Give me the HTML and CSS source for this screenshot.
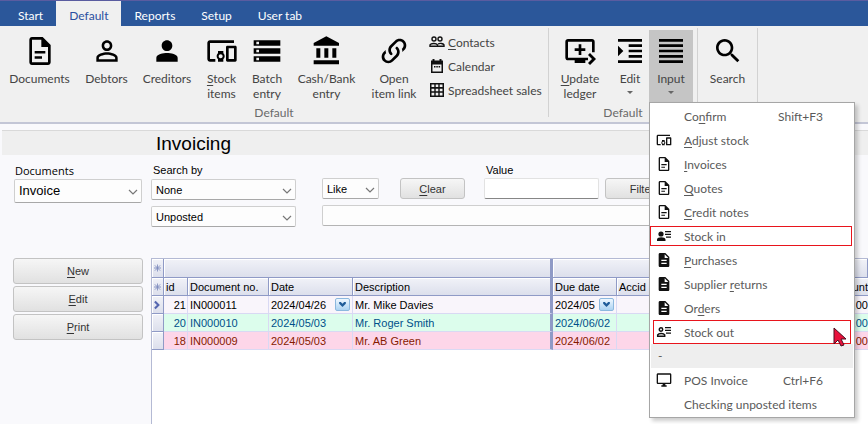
FILE: index.html
```html
<!DOCTYPE html>
<html lang="en">
<head>
<meta charset="utf-8">
<title>Invoicing</title>
<link rel="stylesheet" href="styles.css">
</head>
<body>
<svg class="defs" aria-hidden="true">
  <symbol id="doc" viewBox="0 0 24 24"><path fill-rule="evenodd" d="M14 1.5H6C4.9 1.5 4 2.4 4 3.5V20.5C4 21.6 4.9 22.500 6 22.500H18C19.100 22.500 20 21.600 20 20.500V7.500ZM6 3.500H13V9H18V20.500H6Z"/><path d="M8 12h8v1.800H8zM8 16h5.500v1.800H8z"/></symbol>
  <symbol id="docfill" viewBox="0 0 24 24"><path fill-rule="evenodd" d="M14 1.500H6C4.900 1.500 4 2.400 4 3.500V20.500C4 21.600 4.900 22.500 6 22.500H18C19.100 22.500 20 21.600 20 20.500V7.500ZM8 11.500h8v2H8zM8 16h8v2H8zM13 3.500V9h5.500z"/></symbol>
  <symbol id="person-o" viewBox="0 0 24 24"><path d="M12 5.900c1.160 0 2.100.94 2.100 2.100s-.94 2.100-2.100 2.100S9.900 9.160 9.900 8s.94-2.100 2.100-2.100m0 9c2.970 0 6.100 1.460 6.100 2.100v1.100H5.900V17c0-.64 3.130-2.100 6.100-2.100M12 4C9.790 4 8 5.790 8 8s1.790 4 4 4 4-1.790 4-4-1.790-4-4-4zm0 9c-2.670 0-8 1.340-8 4v3h16v-3c0-2.660-5.330-4-8-4z"/></symbol>
  <symbol id="person" viewBox="0 0 24 24"><path d="M12 12c2.210 0 4-1.790 4-4s-1.790-4-4-4-4 1.790-4 4 1.790 4 4 4zm0 1.500c-2.670 0-8 1-8 3.500v3h16v-3c0-2.500-5.330-3.500-8-3.500z"/></symbol>
  <symbol id="devices" viewBox="0 0 24 24"><path d="M3 6h18V4H3c-1.100 0-2 .9-2 2v12c0 1.100.9 2 2 2h4v-2H3V6zm10 6H9v1.780c-.61.55-1 1.330-1 2.220s.39 1.670 1 2.220V20h4v-1.780c.61-.55 1-1.340 1-2.220s-.39-1.670-1-2.220V12zm-2 5.500c-.83 0-1.500-.67-1.500-1.500s.67-1.500 1.500-1.500 1.500.67 1.500 1.500-.67 1.500-1.500 1.500zM22 8h-6c-.5 0-1 .5-1 1v10c0 .5.5 1 1 1h6c.5 0 1-.5 1-1V9c0-.5-.5-1-1-1zm-1 10h-4v-8h4v8z"/></symbol>
  <symbol id="storage" viewBox="0 0 24 24"><path d="M2 20h20v-4H2v4zm2-3h2v2H4v-2zM2 4v4h20V4H2zm4 3H4V5h2v2zm-4 7h20v-4H2v4zm2-3h2v2H4v-2z"/></symbol>
  <symbol id="bank" viewBox="0 0 24 24"><path d="M4 10v7h3v-7H4zm6 0v7h3v-7h-3zM2 22h19v-3H2v3zm14-12v7h3v-7h-3zm-4.500-9L2 6v2h19V6l-9.500-5z"/></symbol>
  <symbol id="link" viewBox="0 0 24 24"><path d="M10.590 13.410C11 13.800 11 14.440 10.590 14.830C10.200 15.220 9.560 15.220 9.170 14.830C7.220 12.880 7.220 9.710 9.170 7.760L12.710 4.220C14.660 2.270 17.830 2.270 19.780 4.220C21.730 6.170 21.730 9.340 19.780 11.290L18.290 12.780C18.300 11.960 18.170 11.140 17.890 10.360L18.360 9.880C19.540 8.710 19.540 6.810 18.360 5.640C17.190 4.460 15.290 4.460 14.120 5.640L10.590 9.170C9.410 10.340 9.410 12.240 10.590 13.410M13.410 9.170C13.800 8.780 14.440 8.780 14.830 9.170C16.780 11.120 16.780 14.290 14.830 16.240L11.290 19.780C9.340 21.730 6.170 21.730 4.220 19.780C2.270 17.830 2.270 14.660 4.220 12.710L5.710 11.220C5.700 12.040 5.830 12.860 6.110 13.650L5.640 14.120C4.460 15.290 4.460 17.190 5.640 18.360C6.810 19.540 8.710 19.540 9.880 18.360L13.410 14.830C14.590 13.660 14.590 11.760 13.410 10.590C13 10.200 13 9.560 13.410 9.170Z"/></symbol>
  <symbol id="people" viewBox="0 0 16 16"><g fill="none" stroke="#111" stroke-width="1.400"><circle cx="5" cy="5" r="2"/><circle cx="11" cy="5" r="2"/><path d="M1 12.300v-1.500c1-1.500 6-2 7.500 0v1.500zM8.500 12.300H15v-1.500c-.8-1.300-4-2-6-.8"/></g></symbol>
  <symbol id="calendar" viewBox="0 0 16 16"><path fill-rule="evenodd" d="M3.500 1h2v1.500h5V1h2v1.500H14V15H2V2.500h1.500zM3.500 6.500v7h9v-7zM5 8h1.500v1.500H5zM7.300 8h1.500v1.500H7.300zM9.600 8h1.500v1.500H9.600z"/></symbol>
  <symbol id="grid" viewBox="0 0 16 16"><path fill-rule="evenodd" d="M1 1h14v14H1zM2.500 2.500v2.500h2.800V2.500zM6.700 2.500v2.500h2.600V2.500zM10.700 2.500v2.500h2.800V2.500zM2.500 6.700v2.600h2.800V6.700zM6.700 6.700v2.600h2.600V6.700zM10.700 6.700v2.600h2.800V6.700zM2.500 10.800v2.700h2.800v-2.700zM6.700 10.800v2.700h2.600v-2.700zM10.700 10.800v2.700h2.800v-2.700z"/></symbol>
  <symbol id="queue" viewBox="0 0 24 24"><path d="M21 3H3c-1.110 0-2 .89-2 2v12c0 1.100.89 2 2 2h5v2h8v-2h2v-2H3V5h18v8h2V5c0-1.110-.9-2-2-2zm-8 7V7h-2v3H8v2h3v3h2v-3h3v-2h-3zm11 8l-4.500 4.500L18 21l3-3-3-3 1.500-1.500L24 18z"/></symbol>
  <symbol id="indent" viewBox="0 0 24 24"><path d="M3 21h18v-2H3v2zM3 8v8l4-4-4-4zm8 9h10v-2H11v2zM3 3v2h18V3H3zm8 6h10V7H11v2zm0 4h10v-2H11v2z"/></symbol>
  <symbol id="lines" viewBox="0 0 24 24"><path d="M3 21h18v-2H3v2zm0-4h18v-2H3v2zm0-4h18v-2H3v2zm0-4h18V7H3v2zm0-6v2h18V3H3z"/></symbol>
  <symbol id="search" viewBox="0 0 24 24"><path d="M15.500 14h-.79l-.28-.27C15.410 12.590 16 11.110 16 9.500 16 5.910 13.090 3 9.500 3S3 5.910 3 9.500 5.910 16 9.500 16c1.610 0 3.090-.59 4.230-1.570l.27.28v.79l5 4.990L20.490 19l-4.990-5zm-6 0C7.010 14 5 11.990 5 9.500S7.010 5 9.500 5 14 7.010 14 9.500 11.990 14 9.500 14z"/></symbol>
  <symbol id="desktop" viewBox="0 0 24 24"><path d="M21 2H3c-1.100 0-2 .9-2 2v12c0 1.100.9 2 2 2h7v2H8v2h8v-2h-2v-2h7c1.100 0 2-.9 2-2V4c0-1.100-.9-2-2-2zm0 14H3V4h18v12z"/></symbol>
  <symbol id="stock-in" viewBox="0 0 16 16"><circle cx="5" cy="6" r="2.600"/><path d="M1 13v-1.500c0-3 8.500-3 8.500 0V13zM9 3h6v1.300H9zM9 5.700h6V7H9zM10 8.400h5v1.300h-5z"/></symbol>
  <symbol id="stock-out" viewBox="0 0 16 16"><g fill="none" stroke="#111" stroke-width="1.500"><circle cx="5" cy="5.500" r="1.700"/><path d="M1.700 12.300v-1.500c1-1.800 6-1.800 7 0v1.500z"/></g><path d="M9 3h6v1.300H9zM9 5.700h6V7H9zM10 8.400h5v1.300h-5z"/></symbol>
  <symbol id="chev" viewBox="0 0 10 6"><path d="M1 1l4 4 4-4" fill="none" stroke="#777" stroke-width="1.200"/></symbol>
  <symbol id="star" viewBox="0 0 8 8"><path d="M4 0v8M0 4h8M1 1l6 6M7 1L1 7" fill="none" stroke="#7f8dbe"/></symbol>
  <symbol id="drop" viewBox="0 0 8 6"><path d="M0 0h2l2 2 2-2h2v2L4 6 0 2z" fill="#1f5c99"/></symbol>
</svg>

<header>
  <nav class="tabs">
    <a href="#">Start</a><a href="#" class="active">Default</a><a href="#">Reports</a><a href="#">Setup</a><a href="#">User tab</a>
  </nav>
  <div class="ribbon">
    <section class="group wide">
      <div class="tools main-tools">
        <button class="tool"><svg><use href="#doc"/></svg><span>Documents</span></button>
        <button class="tool"><svg><use href="#person-o"/></svg><span>Debtors</span></button>
        <button class="tool"><svg><use href="#person"/></svg><span>Creditors</span></button>
        <button class="tool"><svg><use href="#devices"/></svg><span><u>S</u>tock<br>items</span></button>
        <button class="tool"><svg><use href="#storage"/></svg><span>Batch<br>entry</span></button>
        <button class="tool"><svg><use href="#bank"/></svg><span>Cash/Bank<br>entry</span></button>
        <button class="tool"><svg><use href="#link"/></svg><span>Open<br>item link</span></button>
        <div class="small-tools">
          <button><svg><use href="#people"/></svg><span><u>C</u>ontacts</span></button>
          <button><svg><use href="#calendar"/></svg>Calendar</button>
          <button><svg><use href="#grid"/></svg>Spreadsheet sales</button>
        </div>
      </div>
      <h2>Default</h2>
    </section>
    <section class="group mid">
      <div class="tools mid-tools">
        <button class="tool"><svg><use href="#queue"/></svg><span><u>U</u>pdate<br>ledger</span></button>
        <button class="tool"><svg><use href="#indent"/></svg><span>Edit</span><i class="arrow"></i></button>
        <div class="dropdown">
          <button class="tool open" aria-expanded="true"><svg><use href="#lines"/></svg><span>Input</span><i class="arrow"></i></button>
          <ul class="menu">
            <li><button><b></b><span>Co<u>n</u>firm</span><kbd>Shift+F3</kbd></button></li>
            <li><button><svg><use href="#devices"/></svg><span><u>A</u>djust stock</span></button></li>
            <li><button><svg><use href="#doc"/></svg><span><u>I</u>nvoices</span></button></li>
            <li><button><svg><use href="#doc"/></svg><span><u>Q</u>uotes</span></button></li>
            <li><button><svg><use href="#doc"/></svg><span><u>C</u>redit notes</span></button></li>
            <li class="marked"><button><svg><use href="#stock-in"/></svg><span>Stock in</span></button></li>
            <li><button><svg><use href="#docfill"/></svg><span><u>P</u>urchases</span></button></li>
            <li><button><svg><use href="#docfill"/></svg><span>Supplier <u>r</u>eturns</span></button></li>
            <li><button><svg><use href="#docfill"/></svg><span>Or<u>d</u>ers</span></button></li>
            <li class="marked tall"><button><svg><use href="#stock-out"/></svg><span>Stock out</span></button>
              <svg class="cursor" viewBox="0 0 14 20"><path d="M1 1v16l4-4 3 6 3-1-3-6h5z" fill="#e8113c" stroke="#4a1020"/></svg></li>
            <li class="divider">-</li>
            <li><button><svg><use href="#desktop"/></svg><span>POS Invoice</span><kbd>Ctrl+F6</kbd></button></li>
            <li><button><b></b><span>Checking unposted items</span></button></li>
          </ul>
        </div>
      </div>
      <h2>Default</h2>
    </section>
    <section class="group">
      <div class="tools last-tools">
        <button class="tool"><svg><use href="#search"/></svg><span>Search</span></button>
      </div>
    </section>
  </div>
</header>

<main>
  <h1>Invoicing</h1>
  <div class="filters">
    <div class="field doc-field">
      <label for="documents">Documents</label>
      <div class="select"><select id="documents"><option>Invoice</option></select><svg><use href="#chev"/></svg></div>
    </div>
    <div class="field search-field">
      <label for="searchby">Search by</label>
      <div class="select"><select id="searchby"><option>None</option></select><svg><use href="#chev"/></svg></div>
      <div class="select"><select aria-label="Status"><option>Unposted</option></select><svg><use href="#chev"/></svg></div>
    </div>
    <div class="query">
      <div class="query-row">
        <div class="select like"><select aria-label="Comparison"><option>Like</option></select><svg><use href="#chev"/></svg></div>
        <button class="btn"><span><u>C</u>lear</span></button>
        <div class="field value-field"><label for="value">Value</label><input id="value" type="text"></div>
        <button class="btn filter">Filter</button>
      </div>
      <input class="expr" type="text" aria-label="Filter expression">
    </div>
  </div>
  <div class="content">
    <div class="actions">
      <button class="btn"><span><u>N</u>ew</span></button>
      <button class="btn"><span><u>E</u>dit</span></button>
      <button class="btn"><span><u>P</u>rint</span></button>
    </div>
    <div class="sheet">
      <table>
        <colgroup><col class="c-mark"><col class="c-id"><col class="c-no"><col class="c-date"><col class="c-desc"><col class="c-due"><col><col class="c-amt"></colgroup>
        <thead>
          <tr><th class="mark"><svg><use href="#star"/></svg></th><th colspan="4" class="split"></th><th colspan="3"></th></tr>
          <tr><th class="mark"><svg><use href="#star"/></svg></th><th>id</th><th>Document no.</th><th>Date</th><th class="split">Description</th><th>Due date</th><th>Accid</th><th class="amt">Amount</th></tr>
        </thead>
        <tbody>
          <tr class="current"><th class="mark"><svg viewBox="0 0 8 10"><path d="M1 1l4 4-4 4" fill="none" stroke="#5566b0" stroke-width="2.400"/></svg></th><td class="num">21</td><td>IN000011</td><td><div class="pick">2024/04/26<button aria-label="Pick date"><svg><use href="#drop"/></svg></button></div></td><td class="split">Mr. Mike Davies</td><td><div class="pick">2024/05<button aria-label="Pick due date"><svg><use href="#drop"/></svg></button></div></td><td></td><td class="amt">0,00</td></tr>
          <tr class="green"><th class="mark"></th><td class="num">20</td><td>IN000010</td><td>2024/05/03</td><td class="split">Mr. Roger Smith</td><td>2024/06/02</td><td></td><td class="amt">0,00</td></tr>
          <tr class="pink"><th class="mark"></th><td class="num">18</td><td>IN000009</td><td>2024/05/03</td><td class="split">Mr. AB Green</td><td>2024/06/02</td><td></td><td class="amt">0,00</td></tr>
        </tbody>
      </table>
    </div>
  </div>
</main>
</body>
</html>
```

FILE: styles.css
```css
* { box-sizing: border-box; }
html, body { height: 100%; }
body {
  margin: 0;
  display: flex;
  flex-direction: column;
  overflow: hidden;
  background: #f9f9fc;
  color: #000;
  font: 11px/14px "Liberation Sans", Arial, sans-serif;
}
button, select, input, kbd { font: inherit; color: inherit; }
button { margin: 0; padding: 0; border: 0; background: none; }
u { text-decoration: underline; text-underline-offset: 2px; }
.defs { position: absolute; width: 0; height: 0; }

header { font: 12px/15px Lato, "Open Sans", sans-serif; }
.tabs {
  display: flex;
  height: 26px;
  border-top: 1px solid #5a5ca0;
  background: #2b579a;
}
.tabs a { padding: 7px 13px 0; color: #fff; text-decoration: none; }
.tabs a:first-child { padding-left: 18px; }
.tabs .active { background: #f0f0f0; color: #2b4fa0; }

.ribbon {
  display: flex;
  height: 98px;
  padding-top: 2px;
  background: #f0f0f0;
  border-bottom: 2px solid #c3c6d6;
  color: #444;
}
.group {
  display: flex;
  flex-direction: column;
  height: 89px;
  border-right: 1px solid #d2d2d2;
}
.group.wide { width: 549px; }
.group.mid { width: 149px; }
.group h2 { margin: 0; font-size: 12px; font-weight: 400; line-height: 14px; color: #6a6a6a; text-align: center; }
.tools { display: grid; height: 78px; flex: none; padding-top: 2px; }
.main-tools { grid-template-columns: 79px 55px 66px 43px 48px 71px 64px 1fr; }
.mid-tools { grid-template-columns: 62px 38px 44px; }
.last-tools { grid-template-columns: 59px; }
.tool {
  display: flex;
  flex-direction: column;
  align-items: center;
  justify-content: flex-start;
  width: 100%;
  height: 73px;
  padding-top: 5px;
  text-align: center;
  white-space: nowrap;
}
.tool svg { flex: none; width: 32px; height: 32px; margin-bottom: 4px; fill: #000; }
.tool.open { background: #c5c5c5; }
.arrow {
  width: 6px;
  margin-top: 5px;
  border: 3px solid transparent;
  border-top-color: #666;
  border-bottom: 0;
}
.small-tools { display: flex; flex-direction: column; padding-left: 3px; }
.small-tools button { display: flex; align-items: center; gap: 3px; height: 24px; white-space: nowrap; }
.small-tools svg { width: 16px; height: 16px; fill: #111; }

.dropdown { position: relative; }
.menu {
  position: absolute;
  top: 72px;
  left: 0;
  z-index: 5;
  width: 206px;
  margin: 0;
  padding: 1px;
  list-style: none;
  background: #fff;
  border: 1px solid #a6a6a6;
  box-shadow: 3px 3px 4px rgba(0, 0, 0, .2);
  color: #5a5a5a;
  white-space: nowrap;
}
.menu li { position: relative; height: 24px; }
.menu button { display: flex; align-items: center; width: 100%; height: 24px; padding: 0 30px 0 5px; text-align: left; }
.menu button svg, .menu b { flex: none; width: 16px; height: 16px; margin-right: 12px; fill: #111; }
.menu kbd { margin-left: auto; }
.menu .marked::after {
  content: "";
  position: absolute;
  inset: 2px 1px 2px -1px;
  border: 1px solid #e8141c;
}
.menu .tall::after { inset: 0 2px 0 2px; }
.menu .divider { padding: 4px 7px; background: #eee; }
.cursor { position: absolute; right: 6px; top: 7px; z-index: 1; width: 14px; height: 20px; }

main { flex: 1; display: flex; flex-direction: column; min-height: 0; padding: 6px 0 0 2px; }
h1 {
  margin: 0;
  padding-left: 154px;
  height: 25px;
  border-top: 1px solid #d9d9d9;
  background: #efefef;
  font-size: 19px;
  font-weight: 400;
  line-height: 26px;
}
.filters { display: flex; align-items: flex-start; height: 103px; padding: 8px 14px 0 12px; }
.field { display: flex; flex-direction: column; }
.field label { height: 16px; padding-left: 2px; }
.doc-field { width: 128px; margin-right: 9px; font-size: 13px; }
.doc-field label { font: 11px/16px "Open Sans", "Noto Sans", sans-serif; padding-left: 1px; }
.search-field { width: 145px; margin-right: 26px; gap: 6px; }
.search-field label { height: 10px; }
.select { position: relative; }
.select select {
  display: block;
  width: 100%;
  height: 21px;
  padding: 0 4px;
  border: 1px solid #cfcfcf;
  border-bottom-color: #a8a8a8;
  border-radius: 2px;
  background: #fdfdfd;
  appearance: none;
}
.doc-field select { height: 24px; }
.select svg { position: absolute; right: 4px; top: 50%; width: 10px; height: 6px; margin-top: -2px; pointer-events: none; }
.query { flex: 1; }
.query-row { display: flex; align-items: flex-end; margin-bottom: 6px; }
.like { width: 57px; margin-right: 21px; }
.value-field { width: 115px; margin: 0 6px 0 19px; }
.value-field label { height: 15px; }
input {
  width: 100%;
  height: 21px;
  border: 1px solid #e2e2e2;
  border-bottom-color: #868686;
  border-radius: 2px;
  background: #fff;
}
.expr { display: block; border-color: #cfcfcf #cfcfcf #b4b4b4; background: #fdfdfd; }
.btn {
  width: 65px;
  height: 21px;
  border: 1px solid #c3c3c3;
  border-radius: 3px;
  background: linear-gradient(#f6f6f6, #e1e1e1);
  color: #333;
}
.btn.filter { width: 74px; }

.content { flex: 1; display: flex; min-height: 0; padding-left: 11px; }
.actions { display: flex; flex-direction: column; gap: 2px; width: 130px; margin-right: 8px; }
.actions .btn { width: 100%; height: 26px; }
.sheet { flex: 1; min-width: 0; overflow: hidden; background: #fff; border: 1px solid #b4bad4; border-right: 0; border-bottom: 0; }
table { width: 100%; table-layout: fixed; border-collapse: separate; border-spacing: 0; }
.c-mark { width: 12px; }
.c-id { width: 24px; }
.c-no { width: 81px; }
.c-date { width: 84px; }
.c-desc { width: 200px; }
.c-due { width: 64px; }
.c-amt { width: 51px; }
th, td { height: 18px; padding: 0 2px; font-weight: 400; text-align: left; white-space: nowrap; overflow: hidden; }
thead th, th.mark {
  border-right: 1px solid #8f9ac6;
  border-bottom: 1px solid #8f9ac6;
  background: linear-gradient(#f1f2f8, #dcdfec);
  box-shadow: inset 1px 1px #fff;
}
thead tr:first-child th { height: 19px; }
th.mark { padding: 0 2px; text-align: center; }
.mark svg { display: block; width: 7px; height: 8px; margin: 0 auto; }
tbody .mark svg { height: 10px; }
td { border-right: 1px solid #d9d9f3; border-bottom: 1px solid #d9d9f3; }
th.split, td.split { border-right: 3px solid #8f9ac6; }
.num { text-align: right; padding-right: 1px; }
th.amt, td.amt { text-align: right; padding-right: 0; border-right: 0; }
.current td { background: #f9f5fb; }
.green td { background: #dcfdec; color: #00508a; }
.pink td { background: #fdd6e9; color: #861a00; }
.pick { display: flex; align-items: center; justify-content: space-between; }
.pick button { display: grid; place-items: center; width: 15px; height: 13px; border: 1px solid #8cb8de; border-radius: 2px; background: linear-gradient(#eef7ff, #acd3f2); }
.pick svg { width: 7px; height: 5px; }
```
